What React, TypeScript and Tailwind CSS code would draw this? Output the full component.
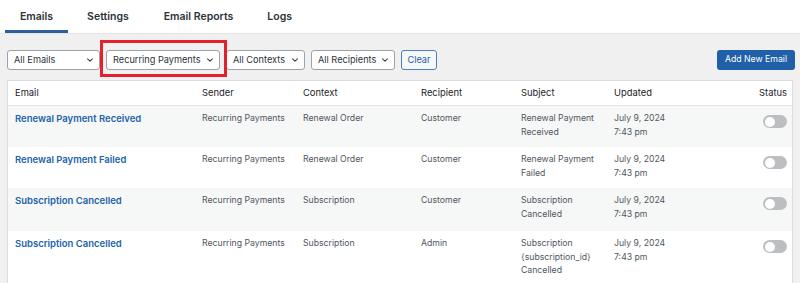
import React from 'react';

type Row = {
    name: string;
    sender: string;
    context: string;
    recipient: string;
    subject: string[];
    updated: string[];
    bg: string;
    h: string;
};

const rows: Row[] = [
    { name: 'Renewal Payment Received', sender: 'Recurring Payments', context: 'Renewal Order', recipient: 'Customer', subject: ['Renewal Payment', 'Received'], updated: ['July 9, 2024', '7:43 pm'], bg: 'bg-[#f6f7f7]', h: 'min-h-[41px]' },
    { name: 'Renewal Payment Failed', sender: 'Recurring Payments', context: 'Renewal Order', recipient: 'Customer', subject: ['Renewal Payment', 'Failed'], updated: ['July 9, 2024', '7:43 pm'], bg: 'bg-white', h: 'min-h-[41px]' },
    { name: 'Subscription Cancelled', sender: 'Recurring Payments', context: 'Subscription', recipient: 'Customer', subject: ['Subscription', 'Cancelled'], updated: ['July 9, 2024', '7:43 pm'], bg: 'bg-[#f6f7f7]', h: 'min-h-[43px]' },
    { name: 'Subscription Cancelled', sender: 'Recurring Payments', context: 'Subscription', recipient: 'Admin', subject: ['Subscription', '{subscription_id}', 'Cancelled'], updated: ['July 9, 2024', '7:43 pm'], bg: 'bg-white', h: 'min-h-[41px]' },
];

const cols = 'grid grid-cols-[194px_101px_118px_100px_93px_1fr_60px]';

const Chevron = () => (
    <svg className="h-[8px] w-[8px] shrink-0" viewBox="0 0 10 10" fill="none" stroke="#3c434a" strokeWidth={1.4} strokeLinecap="round" strokeLinejoin="round">
        <path d="M2 3.5l3 3 3-3" />
    </svg>
);

const Select = ({ label, width }: { label: string; width: string }) => (
    <div className={`${width} h-[20px] flex items-center justify-between whitespace-nowrap pl-[6px] pr-[5px] bg-white border border-[#9ea3a8] rounded-[3px] text-[9.2px] text-[#2c3338]`}>
        <span>{label}</span>
        <Chevron />
    </div>
);

const Toggle = () => (
    <div className="w-[24px] h-[13px] rounded-full bg-[#bcbec1] flex items-center pl-[2px]">
        <div className="w-[10px] h-[10px] rounded-full bg-white" />
    </div>
);

const tabs = ['Emails', 'Settings', 'Email Reports', 'Logs'];

export default function App() {
    return (
        <div className="w-[800px] h-[283px] overflow-hidden bg-[#f0f0f1] font-['Inter','Noto_Sans',sans-serif]">
            {/* tabs */}
            <div className="h-[34px] bg-white border-b border-[#e2e3e5] flex pl-[5px] gap-[4px]">
                {tabs.map((t, i) => (
                    <div
                        key={t}
                        className={`px-[15px] flex items-center text-[10.5px] font-semibold text-[#2c3338] ${i === 0 ? 'border-b-[3px] border-[#2d5f9a] pt-[3px]' : ''} ${i === 2 ? 'ml-[1px]' : ''}`}
                    >
                        {t}
                    </div>
                ))}
            </div>

            <div className="pl-[7px] pr-[5px]">
                {/* filters */}
                <div className="flex items-center justify-between pt-[16px]">
                    <div className="flex items-center gap-[6px]">
                        <Select label="All Emails" width="w-[93px]" />
                        <div className="relative">
                            <Select label="Recurring Payments" width="w-[114px]" />
                            <div className="absolute left-[-6px] right-[-7px] top-[-10px] bottom-[-7px] border-[3px] border-[#e3202b] pointer-events-none" />
                        </div>
                        <Select label="All Contexts" width="w-[79px]" />
                        <Select label="All Recipients" width="w-[84px]" />
                        <div className="w-[36px] h-[20px] flex items-center justify-center border border-[#4a7fc0] rounded-[3px] bg-[#f6f7f7] text-[9.2px] text-[#2a62a8]">
                            Clear
                        </div>
                    </div>
                    <div className="w-[78px] h-[20px] flex items-center justify-center whitespace-nowrap rounded-[3px] bg-[#2060a8] text-white text-[8.7px]">
                        Add New Email
                    </div>
                </div>

                {/* table */}
                <div className="mt-[10px] mr-[2px] bg-white border border-[#dcdcde]">
                    <div className={`${cols} h-[25px] items-center border-b border-[#e2e3e5] text-[9.4px] text-[#1d2327]`}>
                        <div className="pl-[7px]">Email</div>
                        <div>Sender</div>
                        <div>Context</div>
                        <div>Recipient</div>
                        <div>Subject</div>
                        <div>Updated</div>
                        <div className="text-right pr-[5px]">Status</div>
                    </div>
                    {rows.map((r, i) => (
                        <div key={i} className={`${cols} ${r.bg} ${r.h} pt-[6px] pb-[8px] text-[8.7px] leading-[13.5px] text-[#50575e]`}>
                            <div className="pl-[7px] text-[9.5px] font-semibold text-[#2263a8]">{r.name}</div>
                            <div>{r.sender}</div>
                            <div>{r.context}</div>
                            <div>{r.recipient}</div>
                            <div>
                                {r.subject.map((s) => (
                                    <div key={s}>{s}</div>
                                ))}
                            </div>
                            <div>
                                {r.updated.map((s) => (
                                    <div key={s}>{s}</div>
                                ))}
                            </div>
                            <div className="flex justify-end pr-[5px] pt-[3px]">
                                <Toggle />
                            </div>
                        </div>
                    ))}
                </div>
            </div>
        </div>
    );
}
